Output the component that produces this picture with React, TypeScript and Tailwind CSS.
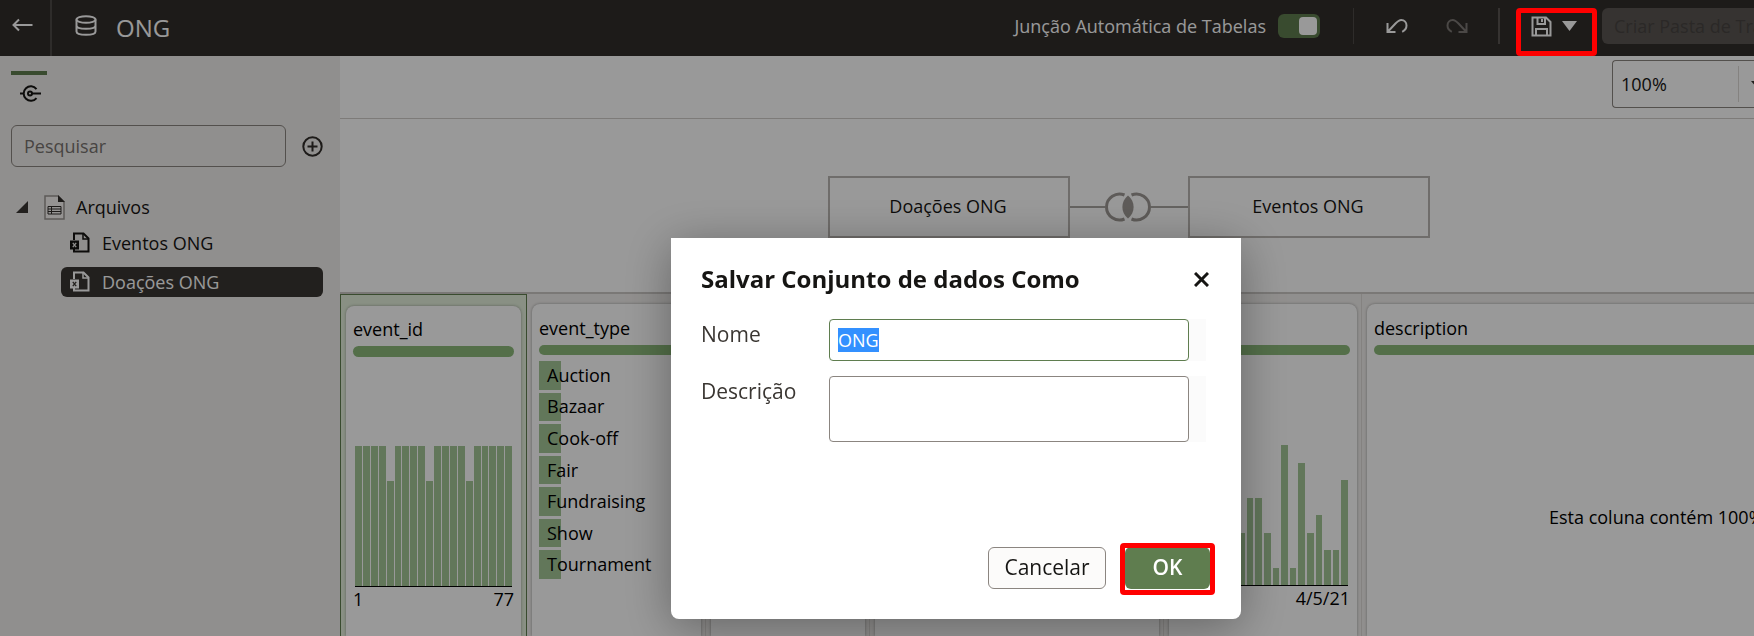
import { useEffect, useRef } from "react";
import type { ReactNode } from "react";

const EVENT_ID = [8, 8, 8, 8, 6, 8, 8, 8, 8, 6, 8, 8, 8, 8, 6, 8, 8, 8, 8, 8];
const EVENT_DATE = [2, 4, 3, 5, 2, 4, 3, 3, 5, 5, 3, 1, 8, 1, 7, 3, 4, 2, 2, 6];
const EVENT_TYPES = ["Auction", "Bazaar", "Cook-off", "Fair", "Fundraising", "Show", "Tournament"];

function Histogram({ data, from, to, gap }: { data: number[]; from: string; to: string; gap: string }) {
  return (
    <div>
      <div className={`mx-0.5 flex h-[141px] items-end border-b border-black ${gap}`}>
        {data.map((v, i) => (
          <div key={i} className="flex-1 bg-[#a3c697]" style={{ height: `${(v / 8) * 100}%` }} />
        ))}
      </div>
      <div className="flex justify-between leading-6">
        <span>{from}</span>
        <span>{to}</span>
      </div>
    </div>
  );
}

function Column({ width, title, children }: { width: string; title?: string; children?: ReactNode }) {
  return (
    <section className={`flex shrink-0 border-r border-[#dcd9d6] pr-1 pl-[5px] pt-2.5 ${width}`}>
      <div className="min-w-0 flex-1 rounded-t-lg bg-white px-[7px] pt-3 shadow-[0_0_3px_rgba(0,0,0,0.35)]">
        <div className="h-[29px]">{title && <h3 className="leading-6">{title}</h3>}</div>
        <div className="h-2.5 rounded-full bg-[#8cba7b]" />
        {children}
      </div>
    </section>
  );
}

function SheetIcon({ mark }: { mark: string }) {
  return (
    <svg width="20" height="21" viewBox="0 0 20 21" fill="none" className="mb-0.5 shrink-0">
      <path d="M4 8V1.500H13.500L18.500 6.500V19.500H4V17" stroke="currentColor" strokeWidth="2" />
      <path d="M13 1v6h6" stroke="currentColor" strokeWidth="1.500" />
      <rect x="0" y="8.500" width="9" height="9" fill="currentColor" />
      <path d="M2.800 10.800l3.400 4.400M6.200 10.800l-3.400 4.400" stroke={mark} strokeWidth="1.300" />
    </svg>
  );
}

function UndoIcon() {
  return (
    <svg width="22" height="16" viewBox="0 0 22 16" fill="none" stroke="currentColor" strokeWidth="2">
      <path d="M1.500 5V14H9.500M2 13.500L9.500 5.500C12 3 13.500 2 15.200 2C18.500 2 20.500 4.500 20.500 7.500C20.500 10.500 18.800 12.500 16.200 13.800" />
    </svg>
  );
}

function Header() {
  return (
    <header className="flex h-14 shrink-0 items-center bg-[#312d2a] text-white">
      <button aria-label="Voltar" className="flex h-full w-[52px] shrink-0 items-center border-r-2 border-[#4e4a47] pb-1.5 pl-3">
        <svg width="21" height="14" viewBox="0 0 21 14" fill="none" stroke="currentColor" strokeWidth="2">
          <path d="M1.500 7H20.500M7 1.500L1.500 7l5.500 5.500" />
        </svg>
      </button>
      <svg width="22" height="21" viewBox="0 0 22 21" fill="none" stroke="currentColor" strokeWidth="2" className="mb-1.5 ml-[23px]">
        <ellipse cx="11" cy="4.500" rx="9.500" ry="3.300" />
        <path d="M1.500 4.500v12c0 2 4 3.300 9.500 3.300s9.500-1.300 9.500-3.300v-12M1.500 10.500c0 2 4 3.300 9.500 3.300s9.500-1.300 9.500-3.300" />
      </svg>
      <h1 className="ml-[19px] pb-px text-2xl leading-8">ONG</h1>
      <div className="ml-auto flex items-center pb-1">
        <label htmlFor="auto-join" className="whitespace-nowrap">
          Junção Automática de Tabelas
        </label>
        <input
          id="auto-join"
          type="checkbox"
          role="switch"
          defaultChecked
          className="ml-3 h-6 w-[42px] appearance-none rounded-md bg-[#5f7d4f] pt-[3px] pl-[21px] before:block before:size-[18px] before:rounded before:bg-white"
        />
        <div className="ml-[33px] h-9 w-px bg-[#4e4a47]" />
        <button aria-label="Desfazer" className="ml-8">
          <UndoIcon />
        </button>
        <button aria-label="Refazer" disabled className="ml-[38px] -scale-x-100 text-[#7d7976]">
          <UndoIcon />
        </button>
        <div className="ml-[30px] h-9 w-0.5 bg-[#5a5653]" />
        <div className="relative ml-[31px] flex items-center gap-2.5">
          <button aria-label="Salvar">
            <svg width="21" height="21" viewBox="0 0 21 21" fill="none" stroke="currentColor" strokeWidth="2">
              <path d="M1.500 1.500H15L19.500 6V19.500h-18zM6.500 1.500V8H14V1.500M5 19.500V13h11v6.500" />
              <path d="M11 3v3" />
            </svg>
          </button>
          <button aria-label="Mais opções de salvamento">
            <svg width="15" height="10" viewBox="0 0 15 10" fill="currentColor">
              <path d="M0 0h15L7.500 10z" />
            </svg>
          </button>
          <div className="pointer-events-none absolute -top-2 -right-5 -bottom-[19px] -left-[15px] z-30 rounded-sm border-[5px] border-[#ff0000]" />
        </div>
        <button disabled className="ml-[25px] h-9 w-[152px] overflow-hidden rounded-l-md bg-[#5a5653] pl-3 text-left whitespace-nowrap text-[#484441]">
          Criar Pasta de Trabalho
        </button>
      </div>
    </header>
  );
}

function Sidebar() {
  return (
    <aside className="w-[340px] shrink-0 bg-[#f1efed] px-[11px] pt-[15px] text-[#161513]">
      <button aria-label="Junções" className="flex h-8 w-9 justify-end border-t-4 border-[#5f7d4f] pt-2.5 pr-1.5">
        <svg width="21" height="17" viewBox="0 0 21 17" fill="none" stroke="currentColor" strokeWidth="2" className="shrink-0">
          <path d="M16.500 4A7.200 7.200 0 1 0 16.500 13M0 8.500H3M12 8.500H21" />
          <circle cx="10" cy="8.500" r="2" />
        </svg>
      </button>
      <div className="mt-[22px] flex items-center gap-4">
        <input
          aria-label="Pesquisar"
          placeholder="Pesquisar"
          className="h-[42px] w-[275px] rounded-md border border-[#8b8580] bg-transparent px-3 placeholder:text-[#787370]"
        />
        <button aria-label="Adicionar">
          <svg width="21" height="21" viewBox="0 0 21 21" fill="none" stroke="#312d2a" strokeWidth="2">
            <circle cx="10.500" cy="10.500" r="9.200" />
            <path d="M10.500 5.500v10M5.500 10.500h10" />
          </svg>
        </button>
      </div>
      <ul className="mt-[25px]">
        <li>
          <div className="flex h-[30px] items-center pl-[5px]">
            <svg width="12" height="12" viewBox="0 0 12 12" fill="#3a3632">
              <path d="M12 0v12H0z" />
            </svg>
            <svg width="21" height="25" viewBox="0 0 21 25" fill="none" className="ml-4">
              <path d="M1 1h13l6 6v17H1z" fill="#f8f6f4" stroke="#9a9693" strokeWidth="1.500" />
              <path d="M14 0v7h7z" fill="#312d2a" />
              <path d="M4 11.500h13v7.500H4zM4 14h13M4 16.500h13M7.500 11.500v7.500" stroke="#312d2a" strokeWidth="1" />
            </svg>
            <span className="ml-[11px]">Arquivos</span>
          </div>
          <ul className="ml-[50px]">
            <li className="mt-1.5 flex h-[30px] items-center gap-3 pl-[9px]">
              <SheetIcon mark="#f1efed" />
              Eventos ONG
            </li>
            <li className="mt-[9px] flex h-[30px] w-[262px] items-center gap-3 rounded-md bg-[#3a3632] pl-[9px] text-white">
              <SheetIcon mark="#3a3632" />
              Doações ONG
            </li>
          </ul>
        </li>
      </ul>
    </aside>
  );
}

function Workspace() {
  return (
    <main className="flex min-w-0 flex-1 flex-col overflow-hidden bg-white text-[#161513]">
      <div className="flex h-[63px] shrink-0 justify-end border-b border-[#d0cdca] pt-1">
        <div className="flex h-12 w-[142px] items-center overflow-hidden rounded-l-sm border border-r-0 border-[#8b8580]">
          <select aria-label="Zoom" className="w-[125px] shrink-0 appearance-none pl-2">
            <option>100%</option>
          </select>
          <div className="h-9 w-px shrink-0 bg-[#dcd9d6]" />
          <svg width="10" height="6" viewBox="0 0 10 6" fill="#3a3632" className="ml-3 shrink-0">
            <path d="M0 0h10L5 6z" />
          </svg>
        </div>
      </div>
      <div className="flex h-[173px] shrink-0 items-center justify-center pt-0.5 pl-[164px]">
        <div className="flex h-[62px] w-[242px] items-center justify-center border-2 border-[#bab6b2] pr-0.5">Doações ONG</div>
        <div className="h-0.5 w-[35px] bg-[#a8a4a0]" />
        <svg width="46" height="30" viewBox="0 0 46 30" fill="none" stroke="#9d9894" strokeWidth="3">
          <path d="M19.500 3A13 13 0 1 0 19.500 27M26.500 3A13 13 0 1 1 26.500 27" />
          <path d="M23 3.500c7.500 6 7.500 17 0 23c-7.500-6-7.500-17 0-23z" fill="#9d9894" stroke="none" />
        </svg>
        <div className="h-0.5 w-[37px] bg-[#a8a4a0]" />
        <div className="flex h-[62px] w-[242px] items-center justify-center border-2 border-[#bab6b2] pr-0.5">Eventos ONG</div>
      </div>
      <div className="flex flex-1 border-t-2 border-[#cbc8c5] bg-[#f1efed] text-black">
        <section className="flex w-[187px] shrink-0 border border-b-0 border-[#5f7d4f] bg-[#e4f0dc] px-[5px] pt-[11px]">
          <div className="flex-1 rounded-t-lg bg-white px-[7px] pt-[11px] shadow-[0_0_3px_rgba(0,0,0,0.35)]">
            <h3 className="h-[29px] leading-6">event_id</h3>
            <div className="mb-[89px] h-[11px] rounded-full bg-[#8cba7b]" />
            <Histogram data={EVENT_ID} from="1" to="77" gap="gap-px" />
          </div>
        </section>
        <Column width="w-[179px]" title="event_type">
          <ul className="mt-1.5 flex h-[218px] flex-col gap-[3px]">
            {EVENT_TYPES.map((t) => (
              <li key={t} className="flex flex-1 items-center bg-linear-to-r from-[#a3c697] from-[22px] to-transparent to-[22px] pl-2">
                {t}
              </li>
            ))}
          </ul>
        </Column>
        <Column width="w-[164px]" />
        <Column width="w-[294px]" />
        <Column width="w-[198px]">
          <div className="mt-[90px]">
            <Histogram data={EVENT_DATE} from="6/10/16" to="4/5/21" gap="gap-0.5" />
          </div>
        </Column>
        <Column width="w-[700px]" title="description">
          <p className="mt-[150px] pl-[175px] leading-6 whitespace-nowrap">Esta coluna contém 100%</p>
        </Column>
      </div>
    </main>
  );
}

function SaveDialog() {
  const nameRef = useRef<HTMLInputElement>(null);
  useEffect(() => {
    nameRef.current?.focus();
    nameRef.current?.select();
  }, []);

  return (
    <div className="fixed inset-0 z-20 flex items-start justify-center bg-black/40 pt-[238px] pl-[158px]">
      <div
        role="dialog"
        aria-labelledby="dialog-title"
        className="w-[570px] rounded-b-lg bg-white px-[30px] pt-[25px] pb-[30px] text-[21px] text-[#3a3632] shadow-[0_8px_48px_rgba(0,0,0,0.35)]"
      >
        <div className="flex h-8 items-center justify-between text-[#161513]">
          <h2 id="dialog-title" className="text-2xl leading-8 font-bold">
            Salvar Conjunto de dados Como
          </h2>
          <button aria-label="Fechar" className="mr-0.5">
            <svg width="15" height="15" viewBox="0 0 15 15" fill="none" stroke="currentColor" strokeWidth="3">
              <path d="M1 1l13 13M14 1L1 14" />
            </svg>
          </button>
        </div>
        <form className="mt-6" onSubmit={(e) => e.preventDefault()}>
          <div className="flex">
            <label htmlFor="ds-name" className="w-32 leading-[30px]">
              Nome
            </label>
            <div className="w-[377px] bg-[#fbfbfb]">
              <input
                ref={nameRef}
                id="ds-name"
                defaultValue="ONG"
                className="block h-[42px] w-[360px] rounded-sm border border-[#5f7d4f] bg-white px-2 text-lg outline-none selection:bg-[#3390ff] selection:text-white"
              />
            </div>
          </div>
          <div className="mt-[15px] flex">
            <label htmlFor="ds-desc" className="w-32 leading-[30px]">
              Descrição
            </label>
            <div className="w-[377px] bg-[#fbfbfb]">
              <textarea id="ds-desc" className="block h-[66px] w-[360px] resize-none rounded-sm border border-[#8b8580] bg-white px-2" />
            </div>
          </div>
          <div className="mt-[105px] mr-px flex justify-end gap-[19px]">
            <button type="button" className="h-[42px] w-[118px] rounded-md border border-[#8b8580] bg-[#fcfbfa] text-[#161513]">
              Cancelar
            </button>
            <div className="relative">
              <button type="submit" className="h-[42px] w-[85px] rounded-md bg-[#5f7d4f] font-semibold text-white">
                OK
              </button>
              <div className="pointer-events-none absolute -inset-x-[5px] -top-1 -bottom-1.5 rounded-sm border-[5px] border-[#ff0000]" />
            </div>
          </div>
        </form>
      </div>
    </div>
  );
}

export default function App() {
  return (
    <div className="flex h-screen flex-col overflow-hidden font-['Open_Sans','Noto_Sans',sans-serif] text-[18px]">
      <Header />
      <div className="flex min-h-0 flex-1">
        <Sidebar />
        <Workspace />
      </div>
      <SaveDialog />
    </div>
  );
}
